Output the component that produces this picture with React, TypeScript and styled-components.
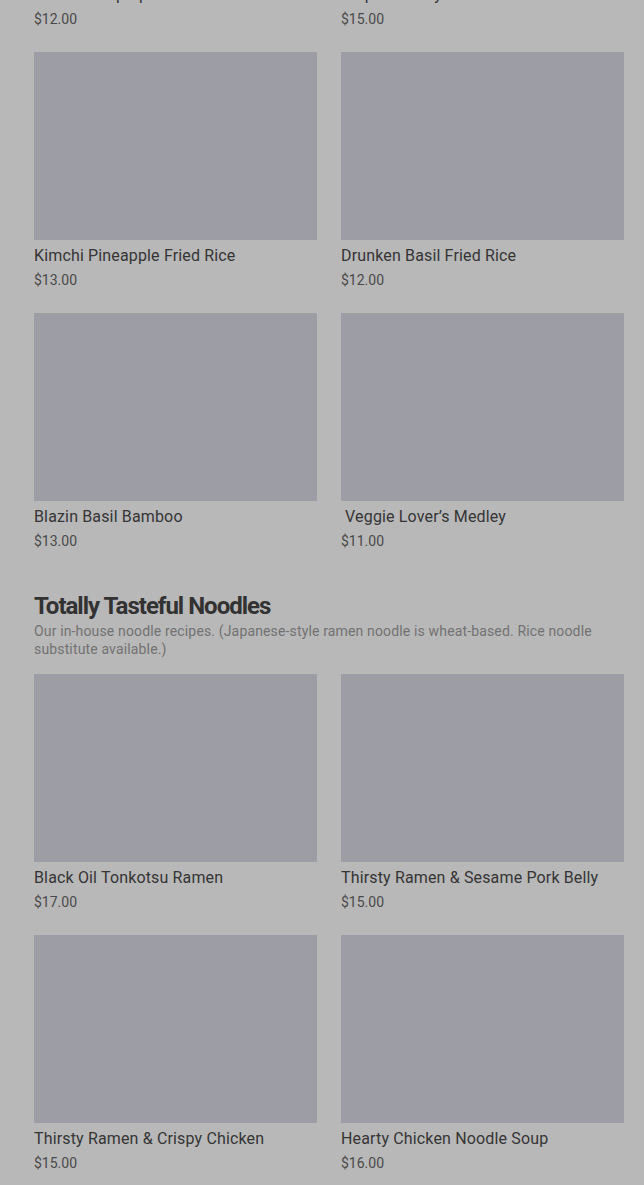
import styled, { createGlobalStyle } from "styled-components";

const GlobalStyle = createGlobalStyle`
  html, body {
    margin: 0;
    padding: 0;
    background: #b8b8b8;
  }
  body {
    font-family: Roboto, "Liberation Sans", sans-serif;
    overflow: hidden;
  }
`;

const Page = styled.div`
  background: #b8b8b8;
  padding: 0 20px 40px 34px;
  margin-top: -209px;
`;

const Section = styled.section`
  & + & {
    margin-top: 39px;
  }
`;

const SectionTitle = styled.h2`
  margin: 0;
  font-family: Roboto, "Liberation Sans", sans-serif;
  font-size: 24px;
  line-height: 32px;
  font-weight: 700;
  letter-spacing: -1px;
  color: #323232;
`;

const SectionText = styled.p`
  margin: 0 0 16px;
  font-size: 14px;
  line-height: 18px;
  letter-spacing: 0.15px;
  color: #727272;
`;

const MenuGrid = styled.div`
  display: grid;
  grid-template-columns: 283px 283px;
  column-gap: 24px;
  row-gap: 23px;
`;

const Card = styled.div`
  display: flex;
  flex-direction: column;
`;

const Thumb = styled.div`
  height: 188px;
  background: #9d9ea5;
  margin-bottom: 4px;
`;

const ItemName = styled.div`
  font-size: 16px;
  line-height: 24px;
  font-weight: 400;
  letter-spacing: 0.15px;
  white-space: pre;
  color: #353535;
  margin-bottom: 2px;
`;

const ItemPrice = styled.div`
  font-size: 14px;
  line-height: 20px;
  color: #4a4a4a;
`;

type Item = { name: string; price: string };

const riceItems: Item[] = [
  { name: "Basil Shrimp Special", price: "$12.00" },
  { name: "Tropical Curry Rice", price: "$15.00" },
  { name: "Kimchi Pineapple Fried Rice", price: "$13.00" },
  { name: "Drunken Basil Fried Rice", price: "$12.00" },
  { name: "Blazin Basil Bamboo", price: "$13.00" },
  { name: " Veggie Lover’s Medley", price: "$11.00" },
];

const noodleItems: Item[] = [
  { name: "Black Oil Tonkotsu Ramen", price: "$17.00" },
  { name: "Thirsty Ramen & Sesame Pork Belly", price: "$15.00" },
  { name: "Thirsty Ramen & Crispy Chicken", price: "$15.00" },
  { name: "Hearty Chicken Noodle Soup", price: "$16.00" },
];

const MenuCard = ({ item }: { item: Item }) => (
  <Card>
    <Thumb />
    <ItemName>{item.name}</ItemName>
    <ItemPrice>{item.price}</ItemPrice>
  </Card>
);

export default function App() {
  return (
    <>
      <GlobalStyle />
      <Page>
        <Section>
          <MenuGrid>
            {riceItems.map((item) => (
              <MenuCard key={item.name} item={item} />
            ))}
          </MenuGrid>
        </Section>
        <Section>
          <SectionTitle>Totally Tasteful Noodles</SectionTitle>
          <SectionText>
            Our in-house noodle recipes. (Japanese-style ramen noodle is
            wheat-based. Rice noodle substitute available.)
          </SectionText>
          <MenuGrid>
            {noodleItems.map((item) => (
              <MenuCard key={item.name} item={item} />
            ))}
          </MenuGrid>
        </Section>
      </Page>
    </>
  );
}
